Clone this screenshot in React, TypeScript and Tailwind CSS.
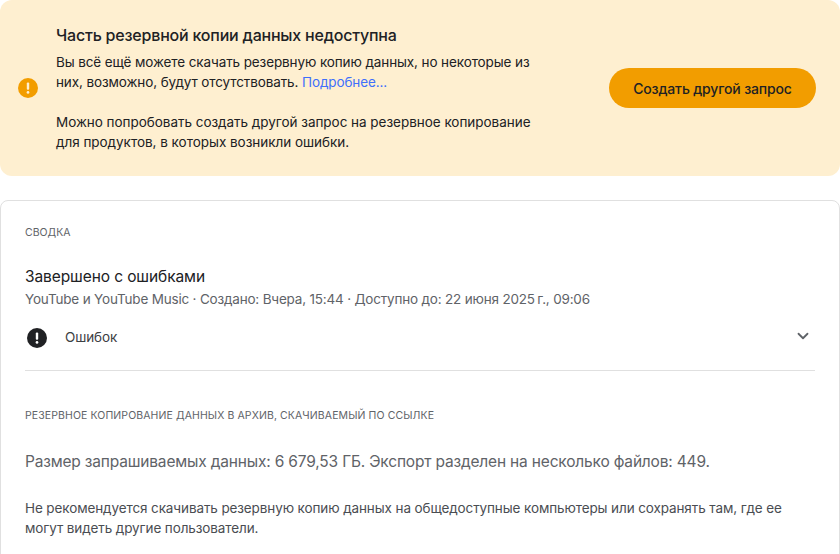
import React from 'react';
import { ChevronDown } from 'lucide-react';

function AlertDot({ size, className }: { size: number; className: string }) {
    return (
        <svg width={size} height={size} viewBox="0 0 20 20" className={className}>
            <circle cx="10" cy="10" r="10" fill="currentColor" />
            <rect x="8.8" y="4.6" width="2.4" height="7.2" rx="1" fill="var(--mark)" />
            <circle cx="10" cy="14.4" r="1.35" fill="var(--mark)" />
        </svg>
    );
}

export default function App() {
    return (
        <div className="w-[840px] h-[554px] overflow-hidden bg-white font-['Inter',sans-serif]">
            {/* Warning banner */}
            <div className="h-[176px] rounded-xl bg-[#feefd0] flex items-center pl-[18px] pr-6">
                <AlertDot size={20} className="shrink-0 text-[#f29d00] [--mark:#feefd0]" />
                <div className="ml-[18px] w-[480px] text-[13.5px] leading-5 tracking-[-0.11px] text-[#202124]">
                    <h2 className="text-[16px] leading-6 font-medium tracking-[-0.2px] mb-[5px] -mt-[2px]">Часть резервной копии данных недоступна</h2>
                    <p>
                        Вы всё ещё можете скачать резервную копию данных, но некоторые из них, возможно, будут отсутствовать.{' '}
                        <span className="text-[#3f6ffb]">Подробнее...</span>
                    </p>
                    <p className="mt-5 tracking-[-0.03px]">
                        Можно попробовать создать другой запрос на резервное копирование для продуктов, в которых возникли ошибки.
                    </p>
                </div>
                <button className="ml-auto w-[207px] h-10 rounded-full bg-[#f29d00] text-[14px] font-medium tracking-[-0.15px] text-[#202124]">
                    Создать другой запрос
                </button>
            </div>

            {/* Summary card */}
            <div className="mt-6 h-[400px] rounded-t-lg border border-[#e0e0e0] px-6 pt-6">
                <div className="text-[10.5px] leading-4 uppercase text-[#5f6368]">Сводка</div>
                <div className="mt-6 text-[15.5px] leading-6 tracking-[-0.1px] text-[#202124]">Завершено с ошибками</div>
                <div className="text-[13.5px] leading-5 tracking-[-0.19px] text-[#5f6368]">
                    YouTube и YouTube Music · Создано: Вчера, 15:44 · Доступно до: 22 июня 2025&#8239;г., 09:06
                </div>
                <div className="mt-[6px] h-[47px] flex items-center pb-[2px]">
                    <AlertDot size={20} className="ml-[2px] text-[#202124] [--mark:#ffffff]" />
                    <span className="ml-[18px] text-[13.5px] tracking-[-0.11px] text-[#3c4043]">Ошибок</span>
                    <ChevronDown size={18} strokeWidth={2.4} className="ml-auto text-[#5f6368] -mt-[3px] mr-[3px]" />
                </div>
                <div className="mt-[8px] border-t border-[#e0e0e0] pt-[37px]">
                    <div className="text-[10.5px] leading-4 uppercase tracking-[0.1px] text-[#5f6368]">
                        Резервное копирование данных в архив, скачиваемый по ссылке
                    </div>
                    <div className="mt-[26px] text-[15.5px] leading-6 tracking-[-0.18px] text-[#5f6368]">
                        Размер запрашиваемых данных: 6 679,53 ГБ. Экспорт разделен на несколько файлов: 449.
                    </div>
                    <p className="mt-6 text-[13.5px] leading-[20px] tracking-[-0.11px] text-[#4a4d52]">
                        Не рекомендуется скачивать резервную копию данных на общедоступные компьютеры или сохранять там, где ее могут видеть другие пользователи.
                    </p>
                </div>
            </div>
        </div>
    );
}
